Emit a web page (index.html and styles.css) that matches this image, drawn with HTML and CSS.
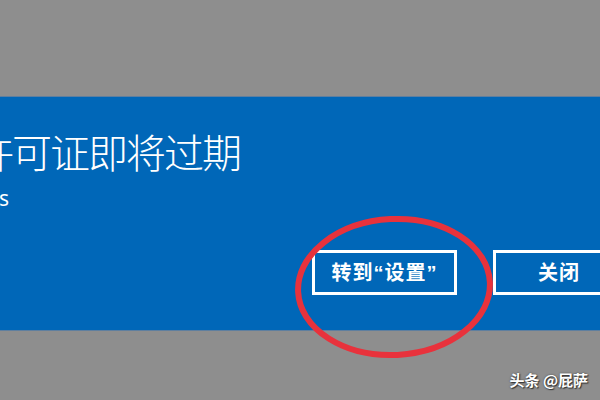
FILE: index.html
```html
<!DOCTYPE html>
<html lang="zh-CN">
<head>
<meta charset="utf-8">
<title>许可证即将过期</title>
<link rel="stylesheet" href="styles.css">
</head>
<body>
<div class="page">
  <div class="top-gap"></div>
  <section class="dialog">
    <div class="title-clip">
      <h1 class="title">你的 Windows 许可证即将过期</h1>
    </div>
    <div class="sub-clip">
      <p class="sub">你需要在“设置”中激活 Windows</p>
    </div>
    <div class="actions">
      <button class="btn btn-primary">转到“设置”</button>
      <button class="btn btn-close">关闭</button>
    </div>
  </section>
  <div class="bottom-gap"></div>

  <svg class="circle" width="210" height="150" viewBox="0 0 210 150" aria-hidden="true">
    <ellipse cx="105" cy="75" rx="96" ry="68" fill="none" stroke="#e8323c" stroke-width="6" transform="rotate(-3 105 75)"/>
  </svg>

  <div class="watermark">头条 @屁萨</div>
</div>
</body>
</html>
```

FILE: styles.css
```css
html, body {
  margin: 0;
  padding: 0;
}
body {
  width: 600px;
  height: 400px;
  overflow: hidden;
  background: #8e8e8e;
  font-family: "Noto Sans CJK SC", "Noto Sans", sans-serif;
}
.page {
  position: relative;
  width: 600px;
  height: 400px;
  display: flex;
  flex-direction: column;
}
.top-gap {
  height: 97px;
  flex: none;
}
.dialog {
  height: 233px;
  flex: none;
  background: #0067b8;
  box-shadow: 0 -1px 0 #5f7f9f, 0 1px 0 #5f7f9f;
  display: flex;
  flex-direction: column;
  color: #fff;
}
.title-clip {
  width: 240px;
  display: flex;
  justify-content: flex-end;
  margin-top: 32px;
}
.title {
  margin: 0;
  white-space: nowrap;
  font-size: 40px;
  line-height: 44px;
  font-weight: 300;
  letter-spacing: -2px;
}
.sub-clip {
  width: 9px;
  display: flex;
  justify-content: flex-end;
  margin-top: 13px;
}
.sub {
  margin: 0;
  white-space: nowrap;
  font-family: "Noto Sans", "Noto Sans CJK SC", sans-serif;
  font-size: 21px;
  line-height: 24px;
}
.actions {
  display: flex;
  gap: 36px;
  padding-left: 312px;
  margin-top: 40px;
}
.btn {
  flex: none;
  height: 45px;
  box-sizing: border-box;
  border: 3px solid #fff;
  background: #0067b8;
  color: #fff;
  font-family: "Liberation Sans", "Noto Sans CJK SC", sans-serif;
  font-size: 20px;
  font-weight: 700;
  letter-spacing: 1px;
  padding: 0;
  line-height: 38px;
}
.btn-primary {
  width: 145px;
}
.btn-close {
  width: 132px;
}
.circle {
  position: absolute;
  left: 289px;
  top: 212px;
}
.watermark {
  position: absolute;
  right: 12px;
  top: 369px;
  color: #fff;
  font-size: 15px;
  line-height: 22px;
  font-weight: 700;
  text-shadow: 1px 1px 1px #333, 0 0 2px #444;
}
```
